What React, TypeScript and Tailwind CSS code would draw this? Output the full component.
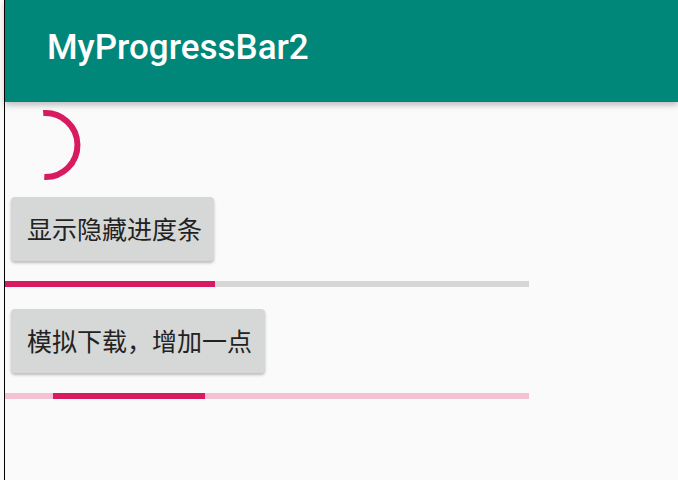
export default function App() {
  return (
    <div className="flex h-[480px] w-[678px] overflow-hidden bg-[#fafafa]">
      <div className="w-[4px] bg-[#fafafa]" />
      <div className="w-px bg-black" />
      <div className="flex flex-1 flex-col">
        <header className="relative z-10 flex h-[102px] items-center bg-[#00877a] pb-[6px] pl-[42px] shadow-[0_3px_6px_rgba(0,0,0,0.25)]">
          <h1 className="text-[35px] font-[Roboto,sans-serif] font-medium text-white">MyProgressBar2</h1>
        </header>

        <svg width="82" height="82" viewBox="0 0 82 82" className="mt-[2px]">
          <path d="M38.2 9.1 A32 32 0 1 1 39.3 73" fill="none" stroke="#d81b60" strokeWidth="6" />
        </svg>

        <button className="mt-[11px] ml-[6px] h-[64px] w-[203px] rounded-[4px] bg-[#d6d7d7] pl-[16px] text-left text-[25px] text-[#222] shadow-[0_2px_3px_rgba(0,0,0,0.25)] font-['Noto_Sans_CJK_SC',sans-serif]">
          显示隐藏进度条
        </button>

        <div className="mt-[20px] h-[6px] w-[524px] bg-[#d6d6d6]">
          <div className="h-full w-[210px] bg-[#d81b60]" />
        </div>

        <button className="mt-[22px] ml-[6px] h-[64px] w-[254px] rounded-[4px] bg-[#d6d7d7] pl-[16px] text-left text-[25px] text-[#222] shadow-[0_2px_3px_rgba(0,0,0,0.25)] font-['Noto_Sans_CJK_SC',sans-serif]">
          模拟下载，增加一点
        </button>

        <div className="mt-[20px] h-[6px] w-[524px] bg-[#f4c2d4]">
          <div className="ml-[48px] h-full w-[152px] bg-[#d81b60]" />
        </div>
      </div>
    </div>
  );
}
